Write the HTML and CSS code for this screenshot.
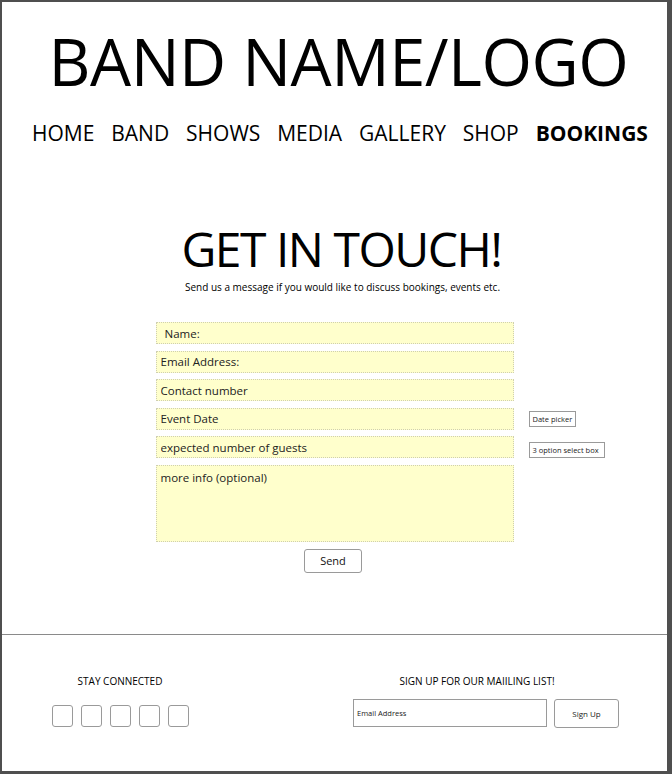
FILE: index.html
```html
<!DOCTYPE html>
<html lang="en">
<head>
<meta charset="utf-8">
<title>Bookings</title>
<link rel="stylesheet" href="styles.css">
</head>
<body>
<div class="frame">
  <header class="masthead">
    <h1 class="logo">BAND NAME/LOGO</h1>
    <nav class="nav">
      <a href="#">HOME</a>
      <a href="#">BAND</a>
      <a href="#">SHOWS</a>
      <a href="#">MEDIA</a>
      <a href="#">GALLERY</a>
      <a href="#">SHOP</a>
      <a href="#" class="active">BOOKINGS</a>
    </nav>
  </header>

  <main class="contact">
    <h2 class="contact-title">GET IN TOUCH!</h2>
    <p class="contact-lead">Send us a message if you would like to discuss bookings, events etc.</p>
    <form class="form">
      <input class="field field-name" type="text" placeholder="Name:">
      <input class="field" type="email" placeholder="Email Address:">
      <input class="field" type="tel" placeholder="Contact number">
      <input class="field" type="text" placeholder="Event Date">
      <span class="widget widget-date">Date picker</span>
      <input class="field" type="text" placeholder="expected number of guests">
      <span class="widget widget-select">3 option select box</span>
      <textarea class="field field-area" placeholder="more info (optional)"></textarea>
      <div class="send-row"><button type="button" class="send">Send</button></div>
    </form>
  </main>

  <footer class="footer">
    <div class="social">
      <h3 class="footer-title">STAY CONNECTED</h3>
      <div class="social-icons">
        <span class="icon-box"></span>
        <span class="icon-box"></span>
        <span class="icon-box"></span>
        <span class="icon-box"></span>
        <span class="icon-box"></span>
      </div>
    </div>
    <div class="mailing">
      <h3 class="footer-title mailing-title">SIGN UP FOR OUR MAIILING LIST!</h3>
      <div class="mailing-form">
        <input class="mail-input" type="email" placeholder="Email Address">
        <button type="button" class="mail-btn">Sign Up</button>
      </div>
    </div>
  </footer>
</div>
</body>
</html>
```

FILE: styles.css
```css
* { box-sizing: border-box; }

html, body {
  margin: 0;
  padding: 0;
  background: #ffffff;
}

body {
  font-family: "Open Sans", "Noto Sans", sans-serif;
  color: #000;
}

.frame {
  width: 672px;
  height: 774px;
  border-style: solid;
  border-color: #4f4f4f;
  border-width: 2px 5px 3px 2px;
  display: flex;
  flex-direction: column;
  background: #fff;
}

/* Header */
.masthead {
  padding-top: 23px;
}

.logo {
  margin: 0;
  font-size: 65px;
  line-height: 72px;
  font-weight: 400;
  text-align: center;
  padding-left: 8px;
  letter-spacing: -0.5px;
}

.nav {
  margin-top: 24px;
  display: flex;
  justify-content: space-between;
  padding: 0 19px 0 30px;
  font-size: 21px;
  line-height: 24px;
}

.nav a {
  color: #000;
  text-decoration: none;
}

.nav .active {
  font-weight: 700;
}

/* Contact */
.contact {
  flex: 1;
  padding-top: 74px;
}

.contact-title {
  margin: 0;
  font-size: 48px;
  line-height: 60px;
  font-weight: 400;
  text-align: center;
  padding-left: 14px;
  letter-spacing: -1.5px;
}

.contact-lead {
  margin: 0;
  font-size: 10px;
  line-height: 14px;
  text-align: center;
  padding-left: 16px;
  padding-top: 1px;
}

.form {
  margin-top: 28px;
  display: grid;
  grid-template-columns: 1fr 358px 1fr;
  row-gap: 6.5px;
  align-items: center;
}

.field {
  grid-column: 2;
  height: 22px;
  margin: 0;
  border: 1px dotted #cfcfb0;
  background: #ffffcc;
  font-family: inherit;
  font-size: 11.5px;
  color: #222;
  padding: 0 4px;
  outline: none;
}

.field::placeholder {
  color: #222;
  opacity: 1;
}

.field-name {
  padding-left: 8px;
}

.field-area {
  height: 77px;
  resize: none;
  padding: 4px 4px;
  line-height: 16px;
}

.widget {
  grid-column: 3;
  justify-self: start;
  margin-left: 15px;
  border: 1px solid #9a9a9a;
  font-size: 7.5px;
  line-height: 14px;
  padding: 0 3px;
  color: #222;
  white-space: nowrap;
}

.widget-select {
  align-self: end;
  padding-right: 5px;
}

.send-row {
  grid-column: 2;
  display: flex;
  justify-content: center;
  padding-right: 3px;
  margin-top: 0.5px;
}

.send {
  width: 58px;
  height: 24px;
  border: 1px solid #9a9a9a;
  border-radius: 3px;
  background: #fff;
  font-family: inherit;
  font-size: 11px;
  color: #111;
  padding: 0;
}

/* Footer */
.footer {
  height: 137px;
  border-top: 1px solid #8a8a8a;
  display: grid;
  grid-template-columns: 236px 1fr;
}

.footer-title {
  margin: 0;
  font-size: 10px;
  line-height: 14px;
  font-weight: 400;
  text-align: center;
}

.social {
  padding-top: 39px;
}

.social-icons {
  margin-top: 17px;
  display: flex;
  justify-content: center;
  gap: 8px;
}

.icon-box {
  width: 21px;
  height: 22px;
  border: 1px solid #9a9a9a;
  border-radius: 3px;
}

.mailing {
  padding-top: 39px;
  padding-left: 115px;
  width: 381px;
}

.mailing-title {
  padding-right: 18px;
}

.mailing-form {
  margin-top: 11px;
  display: flex;
  gap: 7px;
}

.mail-input {
  width: 194px;
  height: 28px;
  margin: 0;
  border: 1px solid #9a9a9a;
  font-family: inherit;
  font-size: 7.5px;
  padding: 0 3px;
  outline: none;
}

.mail-input::placeholder {
  color: #222;
  opacity: 1;
}

.mail-btn {
  width: 65px;
  height: 29px;
  border: 1px solid #9a9a9a;
  border-radius: 3px;
  background: #fff;
  font-family: inherit;
  font-size: 8px;
  color: #222;
  padding: 0;
}
```
